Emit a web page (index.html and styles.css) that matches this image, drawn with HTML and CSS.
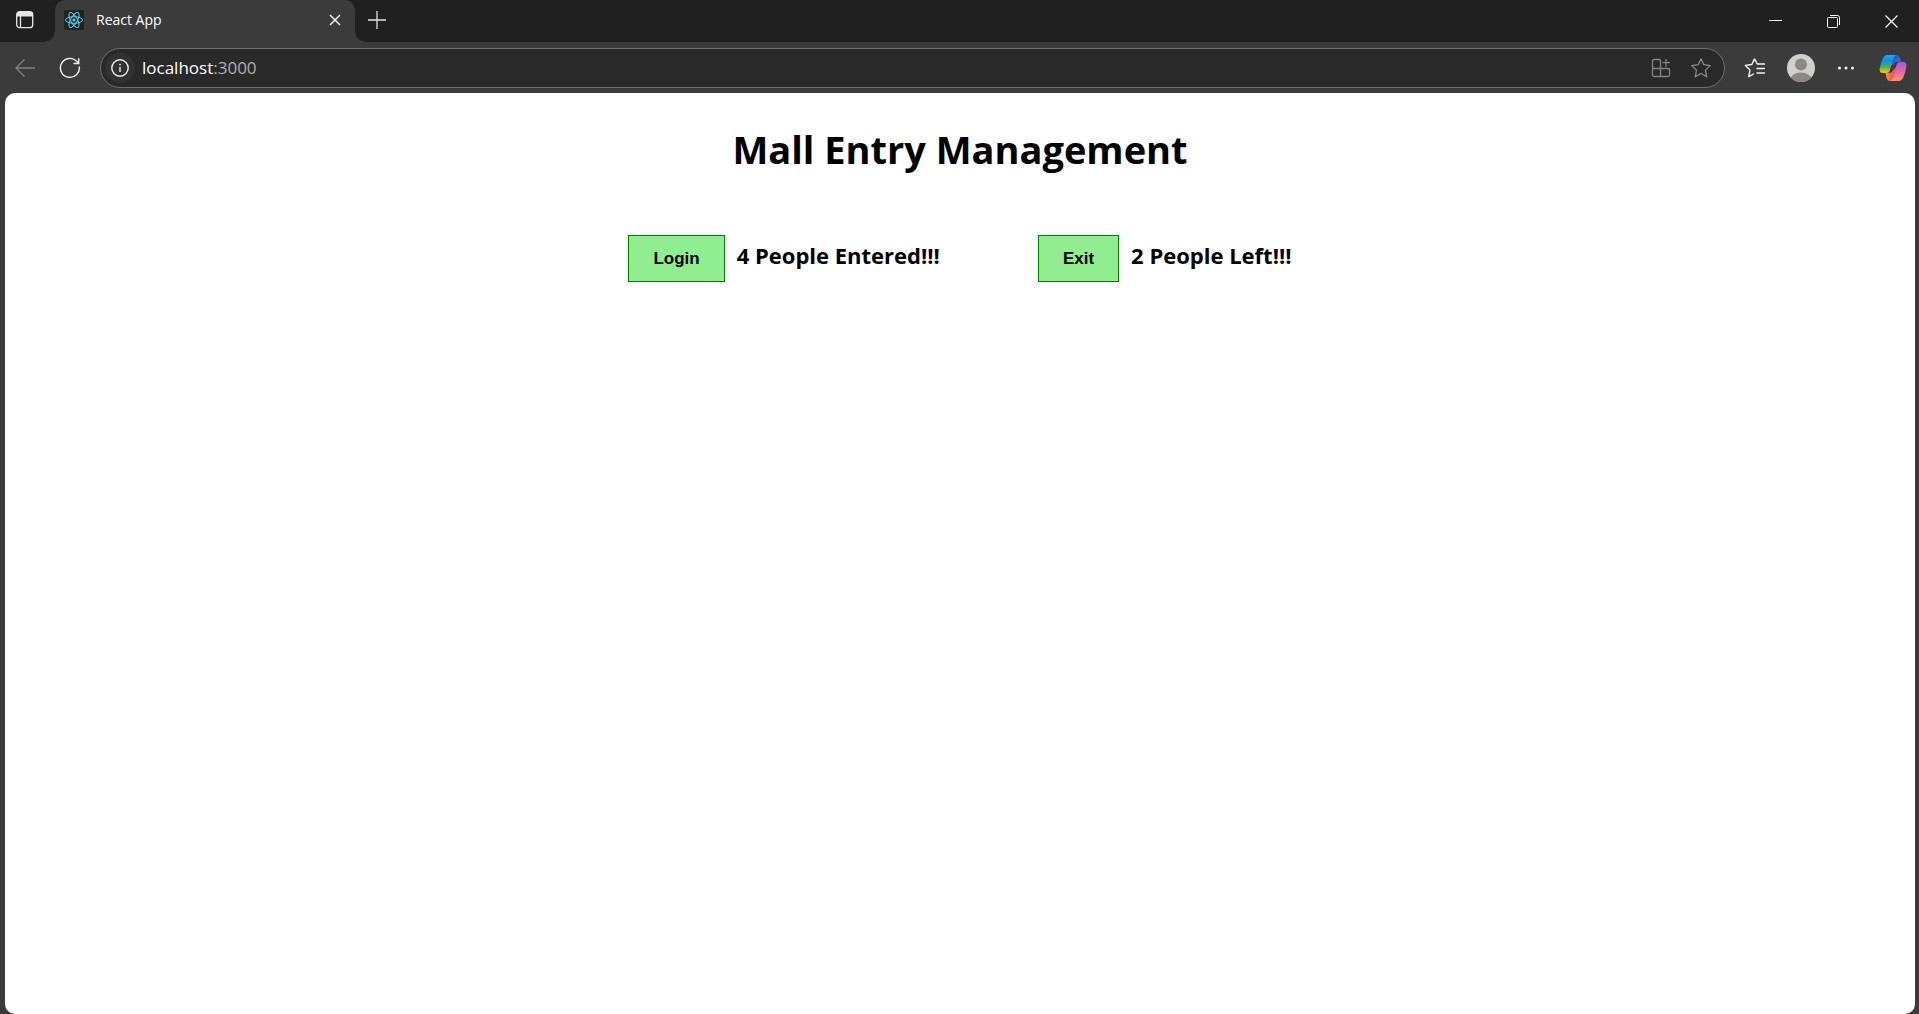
FILE: index.html
```html
<!DOCTYPE html>
<html lang="en">
<head>
<meta charset="utf-8">
<title>React App</title>
<link rel="stylesheet" href="styles.css">
</head>
<body>
<div class="browser">
  <header class="tabstrip">
    <button class="icon-btn workspace" aria-label="Tab actions">
      <svg width="20" height="20" viewBox="0 0 20 20" fill="none" stroke="#e8e8e8" stroke-width="1.3"><rect x="1.7" y="1.7" width="16" height="16" rx="3"/><path d="M2 3.5h15.500M2 5h15.500" stroke-width="3"/><path d="M5.500 6v11.500"/></svg>
    </button>
    <div class="tab">
      <svg class="favicon" width="20" height="20" viewBox="0 0 20 20" fill="none" stroke="#5ccdea" stroke-width="1"><rect width="20" height="20" rx="2" fill="#222" stroke="none"/><ellipse cx="10" cy="10" rx="8.500" ry="3.300"/><ellipse cx="10" cy="10" rx="8.500" ry="3.300" transform="rotate(60 10 10)"/><ellipse cx="10" cy="10" rx="8.500" ry="3.300" transform="rotate(120 10 10)"/><circle cx="10" cy="10" r="1.600" fill="#5ccdea" stroke="none"/></svg>
      <span class="tab-title">React App</span>
      <button class="icon-btn" aria-label="Close tab">
        <svg width="12" height="12" viewBox="0 0 12 12" stroke="#f0f0f0" stroke-width="1.5"><path d="M1 1l10 10M11 1L1 11"/></svg>
      </button>
    </div>
    <button class="icon-btn new-tab" aria-label="New tab">
      <svg width="18" height="18" viewBox="0 0 18 18" stroke="#e4e4e4" stroke-width="1.300"><path d="M9 0v18M0 9h18"/></svg>
    </button>
    <div class="window-controls">
      <button class="icon-btn" aria-label="Minimize"><svg width="14" height="14" viewBox="0 0 14 14" stroke="#fff"><path d="M0 6.500h13"/></svg></button>
      <button class="icon-btn" aria-label="Restore"><svg width="14" height="14" viewBox="0 0 14 14" fill="none" stroke="#fff"><rect x=".5" y="3.500" width="10" height="10" rx="1"/><path d="M3 1.500h7.500q2 0 2 2V11"/></svg></button>
      <button class="icon-btn" aria-label="Close"><svg width="14" height="14" viewBox="0 0 14 14" stroke="#fff" stroke-width="1.200"><path d="M.5 1.500l12 12M12.500 1.500l-12 12"/></svg></button>
    </div>
  </header>

  <nav class="toolbar">
    <button class="icon-btn" aria-label="Back"><svg width="20" height="20" viewBox="0 0 20 20" fill="none" stroke="#828282" stroke-width="1.300"><path d="M9.500 1.500L1 10l8.500 8.500M1 10h19"/></svg></button>
    <button class="icon-btn" aria-label="Refresh"><svg width="22" height="22" viewBox="0 0 22 22" fill="none" stroke="#f0f0f0" stroke-width="1.400"><path d="M20.300 9.500A9.500 9.500 0 1 1 16.500 3.200L19.500 6"/><path d="M19.700 1.200V6.500H14.500"/></svg></button>
    <div class="address">
      <button class="icon-btn site-info" aria-label="Site information"><svg width="18" height="18" viewBox="0 0 18 18" fill="none" stroke="#f0f0f0" stroke-width="1.400"><circle cx="9" cy="9" r="8.200"/><path d="M9 8v5"/><circle cx="9" cy="5.600" r=".9" fill="#f0f0f0" stroke="none"/></svg></button>
      <div class="url">localhost<span class="port">:3000</span></div>
      <button class="icon-btn" aria-label="Apps"><svg width="20" height="20" viewBox="0 0 20 20" fill="none" stroke="#858585" stroke-width="1.300"><path d="M9.500 10V2.500q0-1-1-1H3q-1.500 0-1.500 1.500v14q0 1.500 1.500 1.500h14q1.500 0 1.500-1.500v-5q0-1.500-1.500-1.500H1.500M9.500 10v8.500"/><path d="M15 1v7.500M11.500 4.700H19"/></svg></button>
      <button class="icon-btn" aria-label="Add to favorites"><svg width="20" height="20" viewBox="0 0 20 20" fill="none" stroke="#8b8b8b" stroke-width="1.300" stroke-linejoin="round"><path d="M10 .8l2.800 5.900 6.400.9-4.700 4.500 1.200 6.600L10 15.500l-5.700 3.200 1.200-6.600L.8 7.600l6.400-.9z"/></svg></button>
    </div>
    <div class="actions">
      <button class="icon-btn" aria-label="Favorites"><svg width="22" height="20" viewBox="0 0 22 20" fill="none" stroke="#f4f4f4" stroke-width="1.400" stroke-linejoin="round" stroke-linecap="round"><path d="M20.500 6h-7.200L10.500 .9 7.800 6.500l-6.400.9L6 12l-1.200 6.700 4.700-2.700M13 10.500h7.500M13 15h7.500"/></svg></button>
      <button class="icon-btn" aria-label="Profile"><svg width="28" height="28" viewBox="0 0 28 28"><defs><clipPath id="avatar"><circle cx="14" cy="14" r="14"/></clipPath></defs><g clip-path="url(#avatar)"><path fill="#d1cfcc" d="M0 0h28v28H0z"/><circle cx="14" cy="10.500" r="6" fill="#8c8784"/><ellipse cx="14" cy="25.500" rx="10.500" ry="7" fill="#8c8784"/></g></svg></button>
      <button class="icon-btn" aria-label="Settings and more"><svg width="22" height="18" viewBox="0 0 22 18" fill="#f4f4f4"><circle cx="3.500" cy="9" r="1.500"/><circle cx="10" cy="9" r="1.500"/><circle cx="16.500" cy="9" r="1.500"/></svg></button>
      <button class="icon-btn" aria-label="Copilot"><svg width="28" height="28" viewBox="0 0 28 28">
        <defs>
          <linearGradient id="left" x1="0" y1="0" x2="0" y2="1"><stop offset="0" stop-color="#18aef5"/><stop offset=".3" stop-color="#168ce0"/><stop offset=".65" stop-color="#45ad63"/><stop offset="1" stop-color="#f5d000"/></linearGradient>
          <linearGradient id="right" x1="0" y1="0" x2="0" y2="1"><stop offset="0" stop-color="#9b59ed"/><stop offset=".5" stop-color="#ee60a9"/><stop offset="1" stop-color="#ff9664"/></linearGradient>
          <linearGradient id="fold" x1="0" y1="0" x2="1" y2="1"><stop offset="0" stop-color="#1649d0"/><stop offset="1" stop-color="#218be9"/></linearGradient>
          <linearGradient id="base" x1="0" y1="0" x2="1" y2="0"><stop offset="0" stop-color="#ff8a48"/><stop offset="1" stop-color="#ed4538"/></linearGradient>
        </defs>
        <path fill="url(#fold)" d="M12 1h5q3 0 3.800 3l1 4H18q-3 0-4 3l-3 1z"/>
        <path fill="url(#base)" d="M16 27h-5q-2.500 0-3.300-2.500L6.500 19H10q3 0 4-3l3-3z"/>
        <path fill="url(#left)" d="M8.500 1H18q-2.500 0-3.500 3.500l-3.700 12Q10 19 7.500 19H4Q0 19 .7 14.500 1.500 9 4 4q1.500-3 4.500-3z"/>
        <path fill="url(#right)" d="M19.500 27H10.500q2.500 0 3.500-3.500L17.500 11q.8-3 3.500-3h3q4 0 3.400 4.500Q26.500 19 24 24q-1.500 3-4.500 3z"/>
      </svg></button>
    </div>
  </nav>

  <main class="page">
    <h1 class="title">Mall Entry Management</h1>
    <div class="counters">
      <div class="counter"><button class="count-btn">Login</button><h2 class="count">4 People Entered!!!</h2></div>
      <div class="counter"><button class="count-btn">Exit</button><h2 class="count">2 People Left!!!</h2></div>
    </div>
  </main>
</div>
</body>
</html>
```
FILE: styles.css
```css
* { box-sizing: border-box; }

body {
  margin: 0;
  background: #3b3b3b;
  font-family: "Open Sans", "Noto Sans", sans-serif;
}

.browser {
  display: flex;
  flex-direction: column;
  min-height: 100vh;
}

.icon-btn {
  display: flex;
  flex: none;
  align-items: center;
  justify-content: center;
  padding: 0;
  border: 0;
  background: none;
}

.tabstrip {
  display: flex;
  height: 42px;
  background: #202020;
}

.workspace {
  width: 55px;
  padding: 0 5px 2px 0;
}

.tab {
  position: relative;
  display: flex;
  align-items: center;
  width: 300px;
  padding: 0 14px 2px 9px;
  border-radius: 10px 10px 0 0;
  background: #3b3b3b;
}

/* Flared corners where the active tab meets the toolbar */
.tab::before,
.tab::after {
  content: "";
  position: absolute;
  bottom: 0;
  width: 10px;
  height: 10px;
}

.tab::before {
  right: 100%;
  background: radial-gradient(circle at 0 0, #202020 9px, #3b3b3b 10px);
}

.tab::after {
  left: 100%;
  background: radial-gradient(circle at 100% 0, #202020 9px, #3b3b3b 10px);
}

.tab-title {
  flex: 1;
  padding-left: 12px;
  color: #fff;
  font-size: 14px;
  line-height: 20px;
}

.new-tab {
  width: 44px;
  padding-bottom: 3px;
}

.window-controls {
  display: flex;
  align-items: center;
  gap: 44px;
  margin-left: auto;
  padding-right: 20px;
}

.toolbar {
  display: flex;
  align-items: center;
  gap: 24px;
  height: 51px;
  padding: 0 12px 0 15px;
}

.address {
  display: flex;
  flex: 1;
  align-items: center;
  gap: 20px;
  height: 40px;
  margin-left: -5px;
  padding: 0 13px 0 4px;
  border: 1px solid #707070;
  border-radius: 20px;
  background: #292929;
}

.site-info {
  width: 30px;
  height: 30px;
  border-radius: 50%;
  background: #323232;
}

.url {
  flex: 1;
  margin-left: -13px;
  color: #fff;
  font-size: 17px;
  line-height: 24px;
}

.port { color: #b0b0b0; }

.actions {
  display: flex;
  align-items: center;
  gap: 21px;
  margin-left: -5px;
}

.page {
  flex: 1;
  margin: 0 4px 0 5px;
  padding-top: 28px;
  border-radius: 10px;
  background: #fff;
  color: #000;
}

.title {
  margin: 0;
  font-size: 38px;
  line-height: 56px;
  text-align: center;
}

.counters {
  display: flex;
  justify-content: center;
  gap: 98px;
  margin-top: 58px;
}

.counter {
  display: flex;
  gap: 12px;
}

.count-btn {
  height: 47px;
  padding: 0 24px;
  border: 1px solid #008000;
  background: #90ee90;
  color: #000;
  font: bold 17px "Liberation Sans", Arial, sans-serif;
}

.count {
  margin: 0;
  font-size: 22px;
  line-height: 40px;
}
```
